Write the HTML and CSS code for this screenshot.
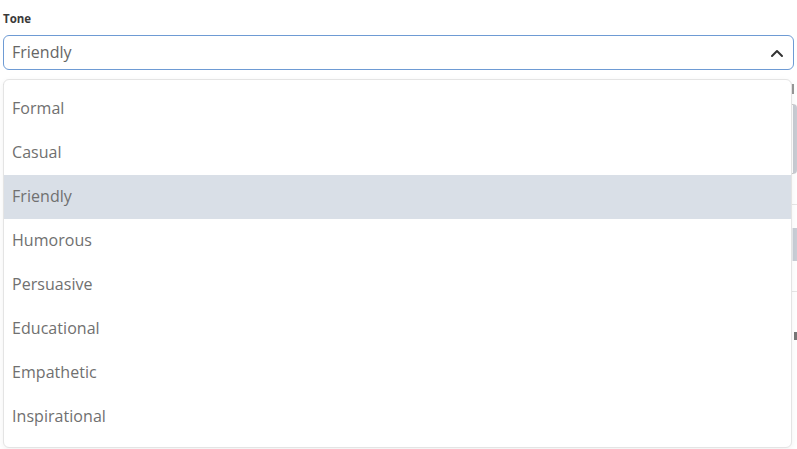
FILE: index.html
```html
<!DOCTYPE html>
<html>
<head>
<meta charset="utf-8">
<link rel="stylesheet" href="styles.css">
</head>
<body>
<div class="page">
  <div class="field">
    <label class="label">Tone</label>
    <div class="select">
      <span class="value">Friendly</span>
      <svg class="chev" width="14" height="10" viewBox="0 0 14 10"><path d="M2 8 L7 3 L12 8" fill="none" stroke="#333" stroke-width="2" stroke-linecap="round" stroke-linejoin="round"/></svg>
    </div>
    <ul class="menu">
      <li class="opt">Formal</li>
      <li class="opt">Casual</li>
      <li class="opt active">Friendly</li>
      <li class="opt">Humorous</li>
      <li class="opt">Persuasive</li>
      <li class="opt">Educational</li>
      <li class="opt">Empathetic</li>
      <li class="opt">Inspirational</li>
    </ul>
  </div>
  <div class="under">
    <div class="u-label"></div>
    <div class="u-area"></div>
    <div class="u-line"></div>
    <div class="u-box"></div>
    <div class="u-line"></div>
    <div class="u-label2"></div>
  </div>
</div>
</body>
</html>
```
FILE: styles.css
```css
* { box-sizing: border-box; }
html, body { margin: 0; padding: 0; background: #fff; }
body { font-family: "Open Sans", "Noto Sans", sans-serif; width: 797px; height: 449px; overflow: hidden; }
.page { padding: 11px 3px 0 3px; position: relative; }
.field { position: relative; }
.label { display: block; font-size: 11.5px; font-weight: 700; color: #3a3a3a; line-height: 16px; height: 24px; }
.select {
  height: 35px;
  border: 1.5px solid #6e9bd4;
  border-radius: 6px;
  display: flex;
  align-items: center;
  justify-content: space-between;
  padding: 0 9px 2px 8px;
}
.value { font-size: 16px; color: #666; letter-spacing: 0; }
.chev { margin-top: 2px; }
.menu {
  position: absolute;
  top: 68px;
  left: 0;
  width: 789px;
  height: 369px;
  margin: 0;
  padding: 7px 0 0 0;
  list-style: none;
  background: #fff;
  border: 1px solid #e4e4e4;
  border-radius: 6px;
  box-shadow: 0 2px 6px rgba(0,0,0,0.06);
  z-index: 2;
}
.opt {
  height: 44px;
  line-height: 42px;
  padding-left: 8px;
  font-size: 16px;
  color: #707070;
  letter-spacing: 0.05px;
}
.opt.active { background: #d9dfe7; }
.under { padding-top: 14px; display: flex; flex-direction: column; }
.u-label { height: 10px; margin-left: 0; border-left: 2px solid #555; border-right: 3px solid #555; width: 100%; opacity: 0.6; }
.u-area { height: 70px; margin-top: 10px; border: 1px solid #ccc; border-right: 4px solid #c8ccd3; border-radius: 4px; margin-right: -3px; }
.u-line { height: 1px; background: #e6e6e6; margin-top: 30px; margin-right: -3px; }
.u-box { height: 33px; margin-top: 23px; background: #e9ebee; border-right: 4px solid #c9ced6; margin-right: -3px; }
.u-label2 { height: 8px; margin-top: 40px; border-right: 3px solid #777; margin-right: -3px; }
```
